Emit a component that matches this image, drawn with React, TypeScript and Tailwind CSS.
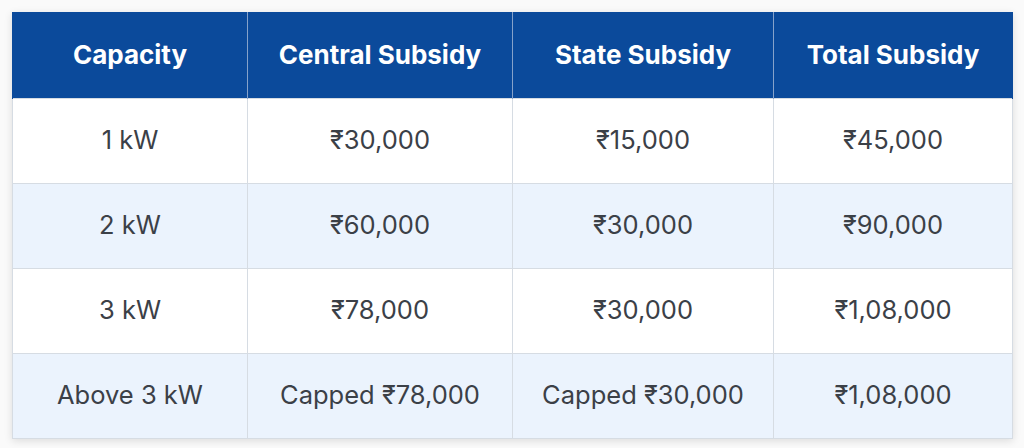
import React from "react";

const rows = [
  ["1 kW", "₹30,000", "₹15,000", "₹45,000"],
  ["2 kW", "₹60,000", "₹30,000", "₹90,000"],
  ["3 kW", "₹78,000", "₹30,000", "₹1,08,000"],
  ["Above 3 kW", "Capped ₹78,000", "Capped ₹30,000", "₹1,08,000"],
];

const headers = ["Capacity", "Central Subsidy", "State Subsidy", "Total Subsidy"];
const widths = ["w-[235px]", "w-[265px]", "w-[261px]", "w-[239px]"];

export default function App() {
  return (
    <div className="w-[1024px] h-[448px] bg-[#fafafa] p-3 font-['Inter','Noto_Sans',sans-serif]">
      <table className="table-fixed border-collapse w-[1000px] bg-white shadow-[0_2px_8px_rgba(0,0,0,0.12)]">
        <thead>
          <tr className="h-[86px] bg-[#0b4a9b]">
            {headers.map((h, i) => (
              <th
                key={h}
                className={`${widths[i]} text-white text-[26px] font-bold text-center border-x border-[#86a2ca] first:border-l-[#0b4a9b] last:border-r-[#0b4a9b]`}
              >
                {h}
              </th>
            ))}
          </tr>
        </thead>
        <tbody>
          {rows.map((r, ri) => (
            <tr key={ri} className={`h-[85px] ${ri % 2 === 1 ? "bg-[#ebf3fd]" : "bg-white"}`}>
              {r.map((c, ci) => (
                <td
                  key={ci}
                  className="text-center text-[25.5px] text-[#3b4047] border border-[#d6dce3]"
                >
                  {c}
                </td>
              ))}
            </tr>
          ))}
        </tbody>
      </table>
    </div>
  );
}
